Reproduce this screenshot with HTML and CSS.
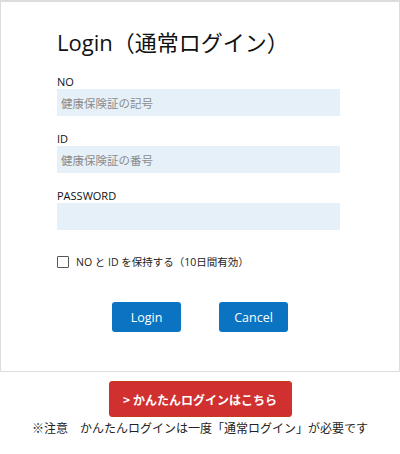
FILE: index.html
```html
<!DOCTYPE html>
<html lang="ja">
<head>
<meta charset="utf-8">
<title>Login</title>
<link rel="stylesheet" href="styles.css">
</head>
<body>
<div class="panel">
  <h1 class="title">Login（通常ログイン）</h1>
  <form class="fields">
    <div class="field">
      <label class="label">NO</label>
      <input class="input" type="text" placeholder="健康保険証の記号">
    </div>
    <div class="field">
      <label class="label">ID</label>
      <input class="input" type="text" placeholder="健康保険証の番号">
    </div>
    <div class="field">
      <label class="label">PASSWORD</label>
      <input class="input" type="password">
    </div>
  </form>
  <label class="keep"><span class="box"></span><span class="keep-text">NO と ID を保持する（10日間有効）</span></label>
  <div class="actions">
    <button class="btn" type="button">Login</button>
    <button class="btn" type="button">Cancel</button>
  </div>
</div>
<div class="easy">
  <a class="easy-btn" href="#">&gt; かんたんログインはこちら</a>
  <p class="note">※注意　かんたんログインは一度「通常ログイン」が必要です</p>
</div>
</body>
</html>
```

FILE: styles.css
```css
html, body {
  margin: 0;
  padding: 0;
  background: #ffffff;
}
body {
  width: 400px;
  font-family: "Open Sans", "Noto Sans CJK JP", sans-serif;
  color: #222222;
}
.panel {
  box-sizing: border-box;
  width: 400px;
  height: 372px;
  border: 1px solid #dddddd;
  border-top-width: 2px;
  padding: 25px 59px 0 56px;
  display: flex;
  flex-direction: column;
}
.title {
  margin: 0;
  font-size: 22px;
  font-weight: normal;
  line-height: 30px;
  color: #111111;
}
.fields {
  margin: 18px 0 0 0;
  display: flex;
  flex-direction: column;
  gap: 16px;
}
.field {
  display: flex;
  flex-direction: column;
}
.label {
  font-size: 11px;
  line-height: 14px;
  font-weight: 500;
  color: #111111;
}
.input {
  box-sizing: border-box;
  width: 283px;
  height: 27px;
  margin: 0;
  border: none;
  background: #e6f0f9;
  padding: 0 4px;
  font-family: "Noto Sans CJK JP", sans-serif;
  font-size: 11.5px;
  color: #333333;
  outline: none;
}
.input::placeholder {
  color: #8c8c8c;
}
.keep {
  margin-top: 26px;
  display: flex;
  align-items: center;
  gap: 7px;
  height: 12px;
  font-size: 10.5px;
  line-height: 14px;
}
.box {
  box-sizing: border-box;
  width: 12px;
  height: 12px;
  border: 1.5px solid #555555;
  border-radius: 1px;
  background: #ffffff;
  flex: none;
}
.keep-text {
  color: #222222;
}
.actions {
  margin-top: 34px;
  display: flex;
  justify-content: center;
  gap: 38px;
  padding-left: 3px;
}
.btn {
  width: 69px;
  height: 30px;
  border: none;
  border-radius: 3px;
  background: #0a73c2;
  color: #ffffff;
  font-family: "Open Sans", "Noto Sans CJK JP", sans-serif;
  font-size: 12.5px;
  padding: 0;
}
.easy {
  display: flex;
  flex-direction: column;
  align-items: center;
}
.easy-btn {
  box-sizing: border-box;
  margin-top: 9px;
  width: 183px;
  height: 36px;
  display: flex;
  align-items: center;
  justify-content: center;
  background: #d0302f;
  border: 1px solid #c53a1e;
  border-radius: 3px;
  color: #ffffff;
  font-family: "Noto Sans CJK JP", sans-serif;
  font-weight: bold;
  font-size: 12px;
  text-decoration: none;
}
.note {
  margin: 3px 0 0 0;
  font-family: "Noto Sans CJK JP", sans-serif;
  font-size: 12px;
  line-height: 16px;
  color: #222222;
}
```
